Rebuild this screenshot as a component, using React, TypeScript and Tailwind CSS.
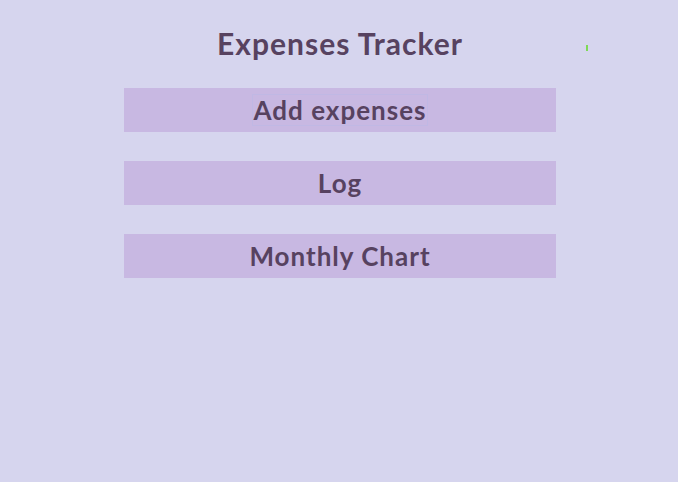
export default function App() {
  const items = ["Add expenses", "Log", "Monthly Chart"];

  return (
    <div className="relative min-h-[482px] w-full bg-[#d6d5ee] text-[#574260]" style={{ fontFamily: "Lato, 'Noto Sans', sans-serif" }}>
      {/* stray marker */}
      <div className="absolute left-[586px] top-[45px] h-[6px] w-[2px] bg-[#7ed957]" />

      <div className="ml-[124px] flex w-[432px] flex-col pt-[25px]">
        <h1 className="text-center text-[30px] font-bold leading-[36px] tracking-[1px]">Expenses Tracker</h1>

        <div className="mt-[27px] flex flex-col gap-[29px]">
          {items.map((label, i) => (
            <button
              key={label}
              className="flex h-[44px] w-full items-center justify-center bg-[#c8b8e2] text-[26px] font-bold tracking-[1px] text-[#574260]"
            >
              <span className={i === 0 ? "border border-[#c0b8e4] px-[1px] leading-[30px]" : "leading-[30px]"}>{label}</span>
            </button>
          ))}
        </div>
      </div>
    </div>
  );
}
